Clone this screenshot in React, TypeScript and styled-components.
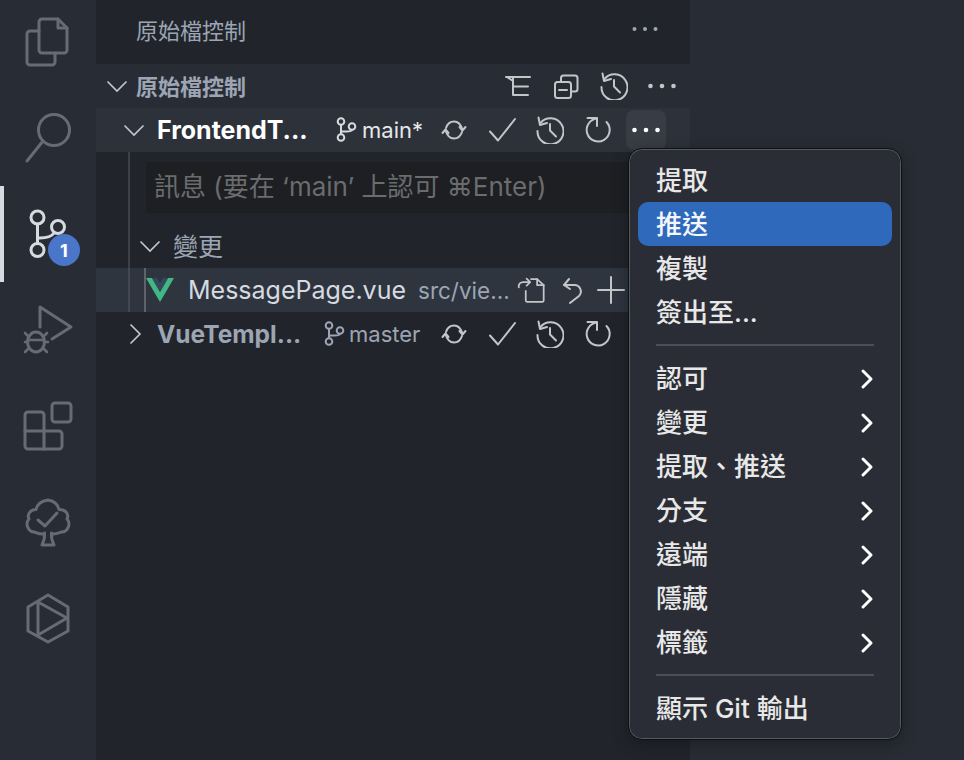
import React from "react";
import styled, { createGlobalStyle } from "styled-components";

const Global = createGlobalStyle`
  html, body { margin: 0; padding: 0; background: #282c34; }
  * { box-sizing: border-box; }
`;

const FONT = `Inter, "Noto Sans CJK TC", "Noto Sans", sans-serif`;

const Page = styled.div`
  position: relative;
  display: flex;
  width: 964px;
  height: 760px;
  overflow: hidden;
  font-family: ${FONT};
  background: #282c34;
`;

const ActivityBar = styled.nav`
  width: 96px;
  flex: none;
  display: flex;
  flex-direction: column;
  background: #282c34;
`;

const ActivityItem = styled.div<{ $active?: boolean }>`
  position: relative;
  width: 96px;
  height: 96px;
  display: flex;
  align-items: center;
  justify-content: center;
  border-left: 4px solid ${(p) => (p.$active ? "#d7dae0" : "transparent")};
  color: ${(p) => (p.$active ? "#d7dae0" : "#686b73")};
  & > svg {
    margin-left: -4px;
  }
`;

const FirstSpacer = styled.div`
  margin-top: -6px;
`;

const Badge = styled.span`
  position: absolute;
  left: 44px;
  top: 48px;
  width: 32px;
  height: 32px;
  border-radius: 50%;
  background: #4a76c9;
  color: #fff;
  font-size: 18px;
  font-weight: 700;
  display: flex;
  align-items: center;
  justify-content: center;
`;

const Sidebar = styled.aside`
  width: 594px;
  flex: none;
  background: #21252b;
  display: flex;
  flex-direction: column;
`;

const TitleBar = styled.header`
  height: 64px;
  flex: none;
  display: flex;
  align-items: center;
  justify-content: space-between;
  padding: 0 21px 6px 40px;
  font-size: 22px;
  color: #9da5b4;
`;

const Row = styled.div<{ $bg?: string; $pad: number; $right?: number }>`
  height: 44px;
  flex: none;
  display: flex;
  align-items: center;
  position: relative;
  padding-left: ${(p) => p.$pad}px;
  padding-right: ${(p) => p.$right ?? 0}px;
  background: ${(p) => p.$bg ?? "transparent"};
`;

const Chevron = styled.svg`
  flex: none;
  width: 24px;
  height: 24px;
  fill: none;
  stroke: #c5c8ce;
  stroke-width: 1.6;
`;

const SectionLabel = styled.span`
  margin: 0 0 2px 7px;
  font-size: 22px;
  font-weight: 700;
  color: #9da5b4;
  flex: 1;
`;

const RepoName = styled.span<{ $muted?: boolean; $w: number }>`
  width: ${(p) => p.$w}px;
  flex: none;
  margin-left: ${(p) => (p.$muted ? 10 : 11)}px;
  font-size: ${(p) => (p.$muted ? 24.5 : 25)}px;
  font-weight: 700;
  white-space: nowrap;
  color: ${(p) => (p.$muted ? "#9da5b4" : "#ffffff")};
`;

const BranchText = styled.span<{ $muted?: boolean }>`
  font-size: 22px;
  margin-left: ${(p) => (p.$muted ? 4 : 5)}px;
  white-space: nowrap;
  flex: 1;
  color: ${(p) => (p.$muted ? "#9da5b4" : "#e6e8ec")};
`;

const BranchIcon = styled.svg<{ $muted?: boolean }>`
  flex: none;
  width: 22px;
  height: 26px;
  fill: none;
  stroke: ${(p) => (p.$muted ? "#9da5b4" : "#d7dae0")};
  stroke-width: 2;
`;

const Slot = styled.span<{ $w?: number; $tint?: string }>`
  flex: none;
  width: ${(p) => p.$w ?? 48}px;
  height: 40px;
  display: flex;
  align-items: center;
  justify-content: center;
  color: ${(p) => p.$tint ?? "#c3c5c8"};
  border-radius: 8px;
`;

const HoverSlot = styled(Slot)`
  width: 40px;
  margin: 0 4px;
  background: #383c45;
  color: #fff;
`;

const Glyph = styled.svg`
  width: 28px;
  height: 28px;
  fill: none;
  stroke: currentColor;
  stroke-width: 2;
  stroke-linecap: round;
  stroke-linejoin: round;
`;

const Dots = styled.svg`
  width: 28px;
  height: 8px;
  fill: currentColor;
`;

const Indented = styled.div`
  position: relative;
  padding-top: 10px;
`;

const Guide = styled.span<{ $left: number; $h: number; $c: string }>`
  position: absolute;
  left: ${(p) => p.$left}px;
  top: 0;
  width: 2px;
  height: ${(p) => p.$h}px;
  background: ${(p) => p.$c};
`;

const InputBox = styled.div`
  margin-left: 50px;
  width: 560px;
  height: 51px;
  background: #1d1f23;
  color: #6b6c6e;
  font-size: 26px;
  line-height: 49px;
  padding-left: 8px;
  white-space: nowrap;
`;

const ChangesRow = styled(Row)`
  margin-top: 11px;
`;

const ChangesLabel = styled.span`
  margin: 0 0 2px 11px;
  font-size: 25px;
  color: #9da5b4;
`;

const FileName = styled.span`
  margin-left: 14px;
  font-size: 25px;
  color: #d7dae0;
  white-space: nowrap;
`;

const FilePath = styled.span`
  margin-left: 12px;
  font-size: 22.5px;
  color: #9da5b4;
  white-space: nowrap;
  flex: 1;
`;

const Editor = styled.main`
  flex: 1;
  background: #282c34;
`;

const Menu = styled.div`
  position: absolute;
  left: 628px;
  top: 148px;
  width: 274px;
  height: 592px;
  padding: 9px;
  border-radius: 14px;
  background: #2a2d35;
  border: 1px solid #0f1012;
  box-shadow: inset 0 0 0 1px #565960, 0 4px 16px rgba(0, 0, 0, 0.3);
`;

const MenuRow = styled.div<{ $active?: boolean }>`
  height: 44px;
  display: flex;
  align-items: center;
  justify-content: space-between;
  padding: 2px 18px 0;
  border-radius: 10px;
  font-size: 26px;
  font-weight: 500;
  line-height: 1;
  color: ${(p) => (p.$active ? "#f4f7fb" : "#e8e8e8")};
  background: ${(p) => (p.$active ? "#2f69bb" : "transparent")};
`;

const Sep = styled.div`
  height: 2px;
  margin: 10px 18px;
  background: #4c4f57;
`;

const MenuArrow = styled.svg`
  width: 16px;
  height: 22px;
  fill: none;
  stroke: #fff;
  stroke-width: 3;
  stroke-linecap: round;
  stroke-linejoin: round;
  margin-right: -1px;
`;

const Big = styled.svg`
  width: 56px;
  height: 56px;
  fill: none;
  stroke: currentColor;
  stroke-width: 3;
  stroke-linecap: round;
  stroke-linejoin: round;
`;

const VueLogo = styled.svg`
  width: 28px;
  height: 24px;
  flex: none;
`;

const Down = () => (
  <Chevron viewBox="0 0 24 24">
    <path d="M2.5 7.5 L12 17 L21.5 7.5" />
  </Chevron>
);
const Right = () => (
  <Chevron viewBox="0 0 24 24">
    <path d="M7.5 2.5 L17 12 L7.5 21.5" />
  </Chevron>
);

const More = () => (
  <Dots viewBox="0 0 28 8">
    <circle cx="2.5" cy="4" r="2.3" />
    <circle cx="14" cy="4" r="2.3" />
    <circle cx="25.5" cy="4" r="2.3" />
  </Dots>
);
const SmallMore = () => (
  <Dots viewBox="0 0 28 8">
    <circle cx="3.5" cy="4" r="2" />
    <circle cx="14" cy="4" r="2" />
    <circle cx="24.5" cy="4" r="2" />
  </Dots>
);
const Branch = ({ muted }: { muted?: boolean }) => (
  <BranchIcon $muted={muted} viewBox="0 0 22 26">
    <circle cx="6" cy="4.5" r="3.3" />
    <circle cx="17" cy="9.5" r="3.3" />
    <circle cx="6" cy="20.5" r="3.3" />
    <path d="M6 8 V17 M6 15.5 C6 13 16 16 17 13" />
  </BranchIcon>
);
const History = () => (
  <Glyph viewBox="0 0 28 28">
    <path d="M4.5 7 A13 13 0 1 1 1.5 15" />
    <path d="M2.5 1.5 L4 9 L11 7" />
    <path d="M14 8 V14.5 L20 20.5" />
  </Glyph>
);
const Sync = () => (
  <Glyph viewBox="0 0 28 28" strokeWidth={1.8}>
    <path d="M6 12 C7.5 7.5 11 5.5 14 5.5 C18 5.5 21 8.5 22.5 14" />
    <path d="M19.5 11 L22.5 14.5 L25.5 11" />
    <path d="M22 16 C20.5 20.5 17 22.5 14 22.5 C10 22.5 7 19.5 5.5 14" />
    <path d="M2.5 17 L5.5 13.5 L8.5 17" />
  </Glyph>
);
const Check = () => (
  <Glyph viewBox="0 0 28 28">
    <path d="M2 15.5 L10 24.5 L27 3" />
  </Glyph>
);
const Refresh = () => (
  <Glyph viewBox="0 0 28 28">
    <path d="M13 2.5 A11.5 11.5 0 1 0 22.5 6" />
    <path d="M3.5 2 H13 V10" />
  </Glyph>
);
const TreeList = () => (
  <Glyph viewBox="0 0 28 28" strokeLinecap="butt" strokeWidth={2.4}>
    <path d="M2 5 H26 M3 5 L9 9 M9 5 V23 H24 M9 14.5 H24" />
  </Glyph>
);
const CollapseAll = () => (
  <Glyph viewBox="0 0 28 28">
    <rect x="3" y="10" width="16" height="16" rx="2.5" />
    <path d="M7 18 H15" />
    <path d="M9 10 V6 A2.5 2.5 0 0 1 11.5 3.5 H23 A2.5 2.5 0 0 1 25.5 6 V17 A2.5 2.5 0 0 1 23 19.5 H19" />
  </Glyph>
);
const Reveal = () => (
  <Glyph viewBox="0 0 32 32">
    <path d="M16 3.5 H23 L30.5 10.5 V28 A1.5 1.5 0 0 1 29 29.5 H11.5 A1.5 1.5 0 0 1 10 28 V17" />
    <path d="M23 3.5 V10.5 H30.5" />
    <path d="M2 13 C1.5 9 4 7 7 7 H15 M11 3 L15 7 L11 11" />
  </Glyph>
);
const Undo = () => (
  <Glyph viewBox="0 0 28 28">
    <path d="M12 3 L7 9 L13 13" />
    <path d="M7 9 H18 A6.5 6.5 0 0 1 22 20 L13 27" />
  </Glyph>
);
const Plus = () => (
  <Glyph viewBox="0 0 28 28">
    <path d="M1 14 H27 M14 1 V27" />
  </Glyph>
);
const ArrowR = () => (
  <MenuArrow viewBox="0 0 16 22">
    <path d="M4 3 L12 11 L4 19" />
  </MenuArrow>
);

const RepoActions = () => (
  <>
    <Slot><Sync /></Slot>
    <Slot><Check /></Slot>
    <Slot><History /></Slot>
    <Slot><Refresh /></Slot>
  </>
);

const topItems = ["提取", "推送", "複製", "簽出至..."];
const subItems = ["認可", "變更", "提取、推送", "分支", "遠端", "隱藏", "標籤"];

export default function App() {
  return (
    <Page>
      <Global />
      <ActivityBar>
        <FirstSpacer />
        <ActivityItem>
          <Big viewBox="0 0 56 56">
            <path d="M19 17 H10 A3 3 0 0 0 7 20 V48 A3 3 0 0 0 10 51 H32 A3 3 0 0 0 35 48 V39" />
            <path d="M22 5 H38 L47 14 V36 A3 3 0 0 1 44 39 H22 A3 3 0 0 1 19 36 V8 A3 3 0 0 1 22 5 Z" />
            <path d="M38 5 V14 H47" />
          </Big>
        </ActivityItem>
        <ActivityItem>
          <Big viewBox="0 0 56 56">
            <circle cx="34" cy="20" r="15.5" />
            <path d="M23 31 L7 51" />
          </Big>
        </ActivityItem>
        <ActivityItem $active>
          <Big viewBox="0 0 56 56">
            <circle cx="17.5" cy="11.5" r="6.5" />
            <circle cx="38" cy="21" r="6.5" />
            <circle cx="17.5" cy="44" r="6.5" />
            <path d="M17.5 18 V37 M17.5 32 C20 32 30 33 34 27" />
          </Big>
          <Badge>1</Badge>
        </ActivityItem>
        <ActivityItem>
          <Big viewBox="0 0 56 56">
            <path d="M20 25 V5 L51 25 L32 37" />
            <ellipse cx="16" cy="40" rx="8.5" ry="10" />
            <path d="M8 38 H24 M5 31 L9 35 M27 31 L23 35 M5 40 H8 M24 40 H28 M5 50 L9 46 M27 50 L23 46" strokeWidth="2.6" />
          </Big>
        </ActivityItem>
        <ActivityItem>
          <Big viewBox="0 0 56 56">
            <rect x="32" y="5" width="19" height="19" rx="3" />
            <path d="M8 14 H21 A3 3 0 0 1 24 17 V33 H39 A3 3 0 0 1 42 36 V48 A3 3 0 0 1 39 51 H8 A3 3 0 0 1 5 48 V17 A3 3 0 0 1 8 14 Z" />
            <path d="M5 33 H24 V51" />
          </Big>
        </ActivityItem>
        <ActivityItem>
          <Big viewBox="0 0 56 56">
            <path d="M23 40 C17 40 16 38 14 38 C10 38 7 34 7 30 C7 28 8 26 9 25 C8 23 8 20 10 18 C12 15.5 15 15.5 16 15.5 C17 11 21 7 28 6 C34 7 38 11 39 15.5 C41 15.5 44 15.5 46 18 C48 20 48 23 47 25 C48 26 49 28 49 30 C49 34 46 38 42 38 C39 38 39 40 33 40" />
            <path d="M24.5 39 C25 44 24 47 22 51 H34 C32 47 31 44 31.5 39" />
            <path d="M18 26 L25 32 L37 19" />
          </Big>
        </ActivityItem>
        <ActivityItem>
          <Big viewBox="0 0 56 56">
            <path d="M28 5 L48 17 V41 L28 52 L8 41 V17 Z" />
            <path d="M18 12 V45 M18 12 L47 28 L18 45" />
          </Big>
        </ActivityItem>
      </ActivityBar>

      <Sidebar>
        <TitleBar>
          <span>原始檔控制</span>
          <Slot $tint="#9da5b4"><SmallMore /></Slot>
        </TitleBar>
        <Row $bg="#282c34" $pad={9} $right={4}>
          <Down />
          <SectionLabel>原始檔控制</SectionLabel>
          <Slot><TreeList /></Slot>
          <Slot><CollapseAll /></Slot>
          <Slot><History /></Slot>
          <Slot><More /></Slot>
        </Row>
        <Row $bg="#2c313a" $pad={26} $right={20}>
          <Down />
          <RepoName $w={178}>FrontendT...</RepoName>
          <Branch />
          <BranchText>main*</BranchText>
          <RepoActions />
          <HoverSlot><More /></HoverSlot>
        </Row>
        <Indented>
          <Guide $left={32} $h={124} $c="#3b3f46" />
          <InputBox>訊息 (要在 ‘main’ 上認可 ⌘Enter)</InputBox>
          <ChangesRow $pad={42}>
            <Down />
            <ChangesLabel>變更</ChangesLabel>
          </ChangesRow>
        </Indented>
        <Row $bg="#2e353f" $pad={50} $right={59}>
          <Guide $left={32} $h={44} $c="#43474e" />
          <Guide $left={48} $h={44} $c="#5f6267" />
          <VueLogo viewBox="0 0 28 24">
            <path fill="#41b883" d="M0 0 H6 L14 14 L22 0 H28 L14 24 Z" />
            <path fill="#35495e" d="M6 0 H11 L14 5 L17 0 H22 L14 14 Z" />
          </VueLogo>
          <FileName>MessagePage.vue</FileName>
          <FilePath>src/vie...</FilePath>
          <Slot $w={40}><Reveal /></Slot>
          <Slot $w={40}><Undo /></Slot>
          <Slot $w={40}><Plus /></Slot>
        </Row>
        <Row $pad={27} $right={68}>
          <Right />
          <RepoName $muted $w={166}>VueTempl...</RepoName>
          <Branch muted />
          <BranchText $muted>master</BranchText>
          <RepoActions />
        </Row>
      </Sidebar>

      <Editor />

      <Menu>
        {topItems.map((t, i) => (
          <MenuRow key={t} $active={i === 1}>{t}</MenuRow>
        ))}
        <Sep />
        {subItems.map((t) => (
          <MenuRow key={t}>
            {t}
            <ArrowR />
          </MenuRow>
        ))}
        <Sep />
        <MenuRow>顯示 Git 輸出</MenuRow>
      </Menu>
    </Page>
  );
}
